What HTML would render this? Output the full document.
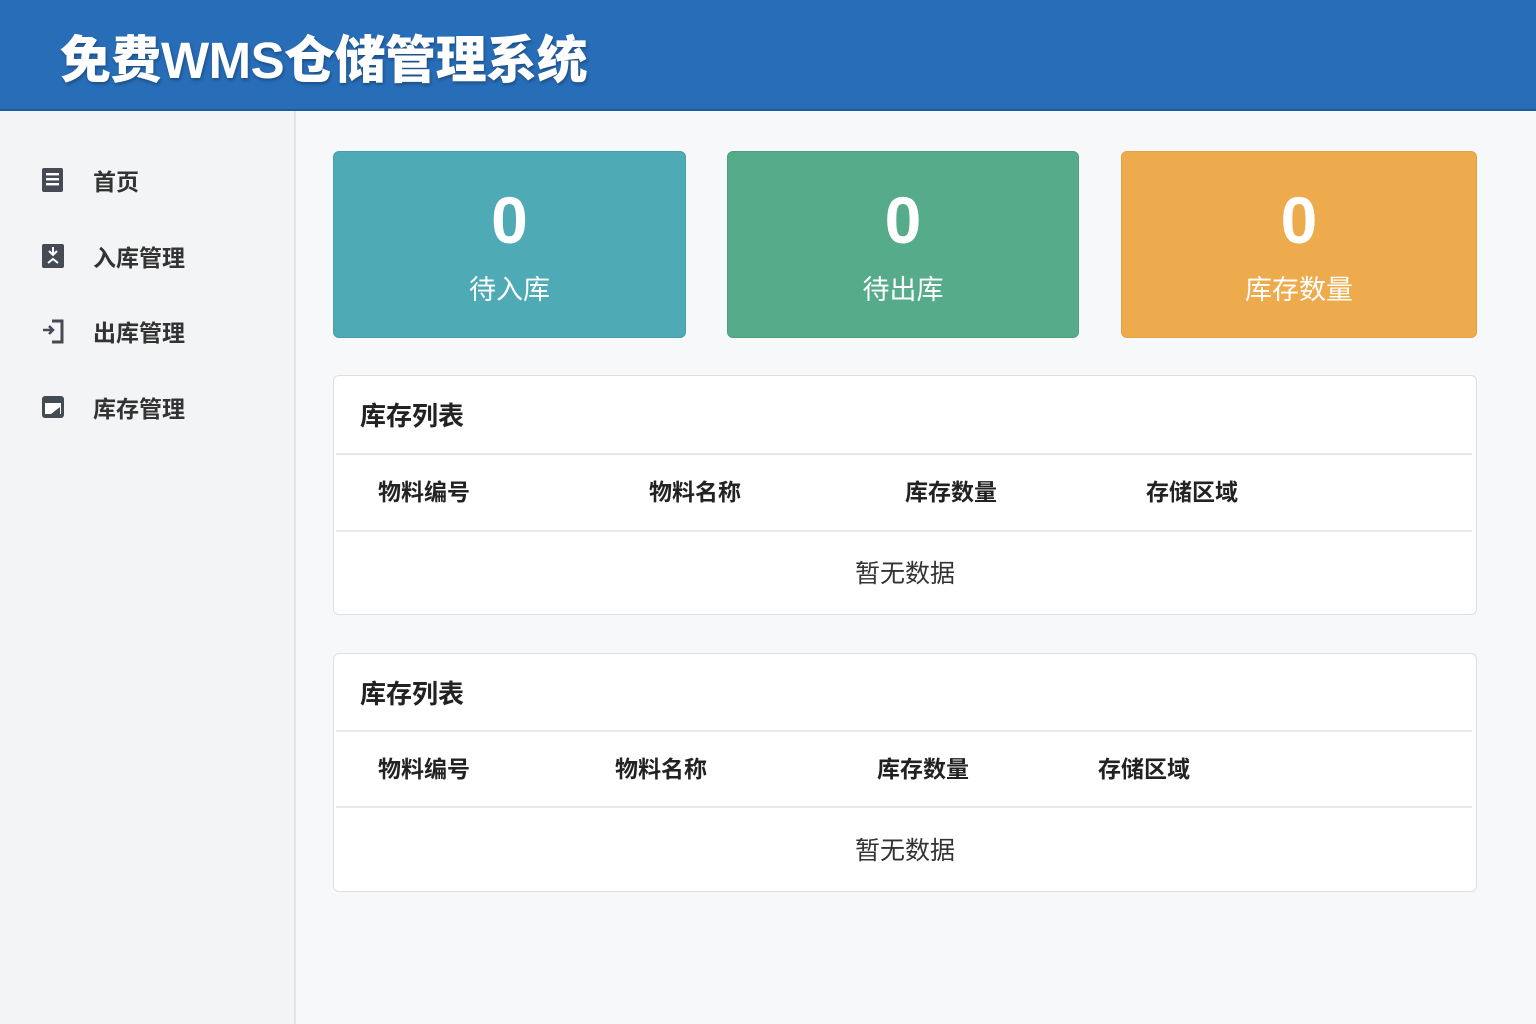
<!DOCTYPE html>
<html><head><meta charset="utf-8"><style>
*{margin:0;padding:0;box-sizing:border-box}
body{width:1536px;height:1024px;overflow:hidden;background:#f7f8fa;font-family:"Liberation Sans","Noto Sans CJK SC",sans-serif;position:relative}
.hdr{position:absolute;left:0;top:0;width:1536px;height:111px;background:#286db8;border-bottom:2px solid #1f5c9f}
.hdr h1{position:absolute;left:60px;top:29px;font-size:51px;line-height:64px;color:#fff;font-weight:900;text-shadow:1px 2px 3px rgba(0,0,0,.3);letter-spacing:-0.5px}
.side{position:absolute;left:0;top:111px;width:296px;height:913px;background:#f3f4f6;border-right:2px solid #e3e5e8}
.it{position:absolute;left:40px;height:30px;display:flex;align-items:center;font-size:23px;color:#333;font-weight:700}
.it svg{width:26px;height:26px;margin-right:27px}
.card{position:absolute;top:151px;height:187px;border-radius:6px;color:#fff;text-align:center}
.card .n{position:absolute;left:0;right:0;top:180px;margin-top:-180px;padding-top:30px;font-size:66px;line-height:76px;font-weight:700}
.card .l{position:absolute;left:0;right:0;top:118px;font-size:27px;line-height:40px}
.pn{position:absolute;left:333px;width:1144px;background:#fff;border:1.5px solid #dcdfe3;border-radius:6px}
.pn .t{position:absolute;left:26px;font-size:26px;font-weight:700;color:#222}
.ln{position:absolute;left:2px;right:4px;height:2px;background:#e6e8eb}
.th{position:absolute;font-size:23px;font-weight:700;color:#222}
.em{position:absolute;left:0;right:0;text-align:center;font-size:25px;color:#333}
</style></head><body>
<div class="hdr"><h1>免费WMS仓储管理系统</h1></div>
<div class="side">
<div class="it" style="top:54px"><svg viewBox="0 0 26 26"><rect x="2" y="1" width="21" height="24" rx="2" fill="#454b55"/><rect x="6" y="6" width="13" height="2.4" fill="#fff"/><rect x="6" y="11" width="13" height="2.4" fill="#fff"/><rect x="6" y="16" width="13" height="2.4" fill="#fff"/></svg>首页</div>
<div class="it" style="top:130px"><svg viewBox="0 0 26 26"><rect x="2" y="1" width="22" height="24" rx="2" fill="#454b55"/><path d="M13 4v8M9 8l4 4 4-4M8 20l5-4 5 4" stroke="#fff" stroke-width="2" fill="none"/></svg>入库管理</div>
<div class="it" style="top:205px"><svg viewBox="0 0 26 26"><path d="M12 3h10v21H12" stroke="#454b55" stroke-width="3" fill="none"/><path d="M3 12h10M9 8l4 4-4 4" stroke="#454b55" stroke-width="2.5" fill="none"/></svg>出库管理</div>
<div class="it" style="top:281px"><svg viewBox="0 0 26 26"><rect x="2" y="2" width="22" height="22" rx="3" fill="#454b55"/><rect x="5" y="9" width="16" height="11" fill="#fff"/><path d="M11 20l9-7v7z" fill="#454b55"/></svg>库存管理</div>
</div>
<div class="card" style="left:333px;width:353px;background:#4eaab5;border:1px solid #44a0ab"><div class="n">0</div><div class="l">待入库</div></div>
<div class="card" style="left:727px;width:352px;background:#56ab8a;border:1px solid #4ca07f"><div class="n">0</div><div class="l">待出库</div></div>
<div class="card" style="left:1121px;width:356px;background:#eeab4e;border:1px solid #e3a045"><div class="n">0</div><div class="l">库存数量</div></div>

<div class="pn" style="top:375px;height:240px">
<div class="t" style="top:20px">库存列表</div>
<div class="ln" style="top:77px"></div>
<div class="th" style="left:44px;top:97px">物料编号</div>
<div class="th" style="left:315px;top:97px">物料名称</div>
<div class="th" style="left:571px;top:97px">库存数量</div>
<div class="th" style="left:812px;top:97px">存储区域</div>
<div class="ln" style="top:154px"></div>
<div class="em" style="top:178px">暂无数据</div>
</div>
<div class="pn" style="top:653px;height:239px">
<div class="t" style="top:20px">库存列表</div>
<div class="ln" style="top:76px"></div>
<div class="th" style="left:44px;top:96px">物料编号</div>
<div class="th" style="left:281px;top:96px">物料名称</div>
<div class="th" style="left:543px;top:96px">库存数量</div>
<div class="th" style="left:764px;top:96px">存储区域</div>
<div class="ln" style="top:152px"></div>
<div class="em" style="top:177px">暂无数据</div>
</div>
</body></html>
